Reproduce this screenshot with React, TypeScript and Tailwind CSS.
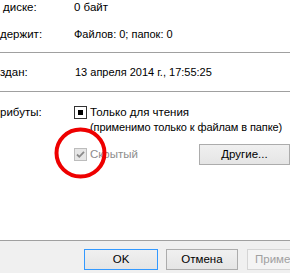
import React from "react";

const font = { fontFamily: '"Liberation Sans", Arial, sans-serif' };

const btnBase = "h-[21px] shrink-0 flex items-center justify-center text-[11.5px] leading-none border";

export default function App() {
  return (
    <div className="relative w-[290px] h-[273px] overflow-hidden bg-white text-black text-[11px] leading-[15px]" style={font}>
      <div className="h-[240px] flex flex-col">
        <div className="flex h-[15px]">
          <div className="w-[74px] shrink-0 pl-[3px] text-[11.5px]">диске:</div>
          <div className="text-[11.5px]">0 байт</div>
        </div>
        <div className="flex h-[15px] mt-[12px]">
          <div className="w-[74px] shrink-0 text-[11.5px]">держит:</div>
          <div className="whitespace-nowrap">Файлов: 0; папок: 0</div>
        </div>
        <div className="h-px bg-[#a0a0a0] mt-[10px]" />
        <div className="flex h-[15px] mt-[12px]">
          <div className="w-[74px] shrink-0 text-[11.5px]">здан:</div>
          <div className="whitespace-nowrap pl-px">13 апреля 2014 г., 17:55:25</div>
        </div>
        <div className="h-px bg-[#a0a0a0] mt-[11px]" />
        <div className="flex mt-[13px]">
          <div className="w-[74px] shrink-0 text-[11.5px]">рибуты:</div>
          <div className="flex flex-col">
            <div className="flex">
              <div className="w-[13px] h-[13px] shrink-0 mt-[1px] border border-[#333] bg-white flex items-center justify-center">
                <div className="w-[5px] h-[5px] bg-black" />
              </div>
              <div className="pl-[3px] whitespace-nowrap">
                <div className="text-[11.5px]">Только для чтения</div>
                <div className="tracking-[-0.1px]">(применимо только к файлам в папке)</div>
              </div>
            </div>
            <div className="flex items-center mt-[9px]">
              <div className="w-[13px] h-[13px] shrink-0 border border-[#bcbcbc] bg-[#e6e6e6] flex items-center justify-center">
                <svg width="11" height="11" viewBox="0 0 11 11">
                  <path d="M2 5.5 L4.3 7.8 L9 2.8" fill="none" stroke="#8a8a8a" strokeWidth="1.8" />
                </svg>
              </div>
              <div className="pl-[3px] text-[#8d8d8d] w-[112px] shrink-0 text-[11.5px]">Скрытый</div>
              <div className={`${btnBase} w-[91px] border-[#acacac] bg-gradient-to-b from-[#f0f0f0] to-[#e5e5e5]`}>Другие...</div>
            </div>
          </div>
        </div>
      </div>
      <div className="h-px bg-[#a0a0a0]" />
      <div className="h-[32px] bg-[#f0f0f0] flex items-start pt-[8px] pl-[84px]">
        <div className={`${btnBase} w-[74px] border-[#3399ff] bg-gradient-to-b from-[#f0f0f0] to-[#e5e5e5]`}>OK</div>
        <div className={`${btnBase} ml-[8px] w-[72px] border-[#acacac] bg-gradient-to-b from-[#f0f0f0] to-[#e5e5e5]`}>Отмена</div>
        <div className={`${btnBase} ml-[9px] w-[74px] border-[#d5d5d5] bg-[#f4f4f4] text-[#a0a0a0] justify-start pl-[7px]`}>Применить</div>
      </div>
      <svg className="absolute left-[53px] top-[126px]" width="56" height="56" viewBox="0 0 56 56">
        <ellipse cx="27.5" cy="27" rx="24" ry="23.5" fill="none" stroke="#ee0000" strokeWidth="4" />
      </svg>
    </div>
  );
}
